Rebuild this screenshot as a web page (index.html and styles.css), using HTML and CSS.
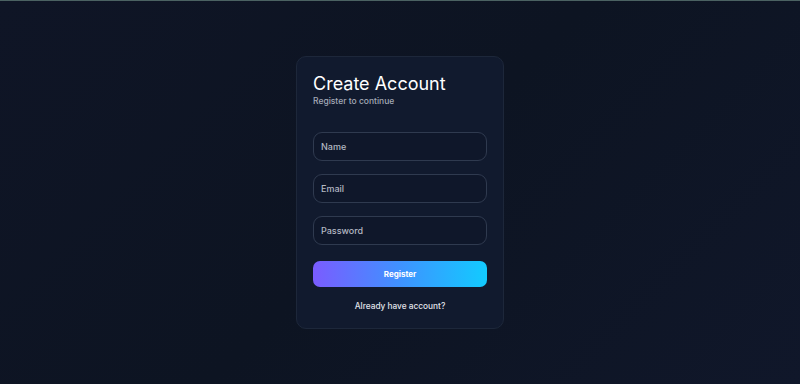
FILE: index.html
```html
<!DOCTYPE html>
<html lang="en">
<head>
  <meta charset="UTF-8">
  <meta name="viewport" content="width=device-width, initial-scale=1.0">
  <title>Create Account</title>
  <link rel="stylesheet" href="styles.css">
</head>
<body>
  <div class="page">
    <form class="card">
      <h1 class="card_tit">Create Account</h1>
      <p class="card_desc">Register to continue</p>
      <div class="field_list">
        <input class="field" type="text" placeholder="Name">
        <input class="field" type="email" placeholder="Email">
        <input class="field" type="password" placeholder="Password">
      </div>
      <button class="btn_submit" type="button">Register</button>
      <a class="link_login" href="#">Already have account?</a>
    </form>
  </div>
</body>
</html>
```

FILE: styles.css
```css
*{margin:0;padding:0;box-sizing:border-box;}
html,body{width:100%;height:100%;}
body{background:linear-gradient(135deg,#0f1526 0%,#0d1422 50%,#10172a 100%);font-family:Inter,"Noto Sans",sans-serif;color:#fff;border-top:1px solid #4b6262;}
.page{height:100%;display:flex;justify-content:center;align-items:center;}
.card{width:208px;height:273px;padding:16px 16px 16px;background-color:#111a2e;border:1px solid #1d273a;border-radius:10px;display:flex;flex-direction:column;}
.card_tit{font-size:18px;font-weight:400;line-height:22px;}
.card_desc{font-size:8.5px;font-weight:500;color:#a3a9b6;margin-top:1px;line-height:11px;}
.field_list{display:flex;flex-direction:column;gap:13px;margin-top:25px;}
.field{height:29px;width:100%;background-color:#0f172a;border:1px solid #2f3a4f;border-radius:9px;padding:0 7px;font-family:inherit;font-size:9px;font-weight:500;color:#fff;outline:none;}
.field::placeholder{color:#b3b8c2;}
.btn_submit{margin-top:16px;height:26px;border:0;border-radius:7px;background:linear-gradient(90deg,#7a5cff 0%,#3f92ff 50%,#12cbff 100%);color:#fff;font-family:inherit;font-size:8px;font-weight:700;}
.link_login{margin-top:14px;text-align:center;font-size:8.3px;font-weight:500;color:#e0e3ea;text-decoration:none;}
```
